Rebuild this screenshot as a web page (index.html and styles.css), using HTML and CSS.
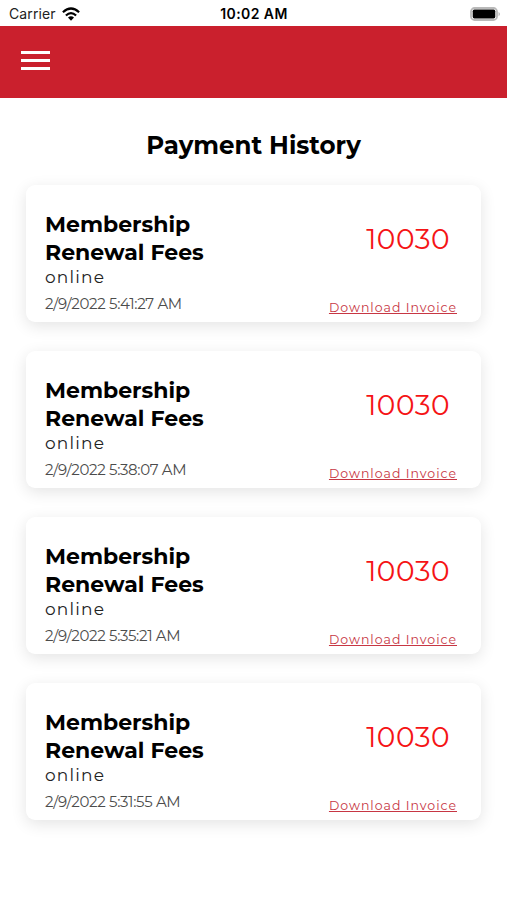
FILE: index.html
```html
<!DOCTYPE html>
<html lang="en">
<head>
<meta charset="utf-8">
<meta name="viewport" content="width=device-width, initial-scale=1">
<title>Payment History</title>
<link rel="stylesheet" href="styles.css">
</head>
<body>
<div class="status">
  <div class="carrier"><span>Carrier</span>
    <svg class="wifi" width="18" height="14" viewBox="0 0 18 14"><g fill="none" stroke="#000" stroke-width="2.2"><path d="M.9 5.2Q9-2.2 17.1 5.2"/><path d="M3.9 8.5Q9 3.8 14.1 8.5"/></g><path d="M6 10.6Q9 8 12 10.6L9 13.7Z"/></svg>
  </div>
  <div class="time">10:02 AM</div>
  <svg class="battery" width="31" height="14" viewBox="0 0 31 14"><rect x="1" y="1" width="26" height="12" rx="3.6" fill="#fff" stroke="#b9b9b9" stroke-width="1.8"/><rect x="2.7" y="2.6" width="22.6" height="8.8" rx="1.7"/><path d="M28.6 4.7Q31 7 28.6 9.3Z" fill="#aaa"/></svg>
</div>
<header class="bar"><button class="menu" aria-label="Menu"><i></i><i></i><i></i></button></header>
<main>
  <h1>Payment History</h1>
  <section class="card">
    <div class="info"><h2>Membership<br>Renewal Fees</h2><p class="mode">online</p><p class="date">2/9/2022 5:41:27 AM</p></div>
    <div class="side"><span class="amount">10030</span><a class="invoice">Download Invoice</a></div>
  </section>
  <section class="card">
    <div class="info"><h2>Membership<br>Renewal Fees</h2><p class="mode">online</p><p class="date">2/9/2022 5:38:07 AM</p></div>
    <div class="side"><span class="amount">10030</span><a class="invoice">Download Invoice</a></div>
  </section>
  <section class="card">
    <div class="info"><h2>Membership<br>Renewal Fees</h2><p class="mode">online</p><p class="date">2/9/2022 5:35:21 AM</p></div>
    <div class="side"><span class="amount">10030</span><a class="invoice">Download Invoice</a></div>
  </section>
  <section class="card">
    <div class="info"><h2>Membership<br>Renewal Fees</h2><p class="mode">online</p><p class="date">2/9/2022 5:31:55 AM</p></div>
    <div class="side"><span class="amount">10030</span><a class="invoice">Download Invoice</a></div>
  </section>
</main>
</body>
</html>
```
FILE: styles.css
```css
* { box-sizing: border-box; margin: 0; padding: 0; }
body { width: 507px; height: 900px; overflow: hidden; background: #fff; color: #000; font-family: Montserrat, Inter, sans-serif; }
.status { height: 26px; display: grid; grid-template-columns: 1fr auto 1fr; align-items: center; padding: 1px 7px 0 8px; font: 14px/24px Inter, sans-serif; }
.carrier { display: flex; align-items: center; gap: 6px; margin-left: 1px; color: #222; letter-spacing: .1px; }
.time { font-weight: 600; letter-spacing: .4px; }
.battery { justify-self: end; margin-right: -1px; }
.bar { height: 72px; background: #ca202d; padding: 25px 21px; }
.menu { display: flex; flex-direction: column; gap: 5px; width: 29px; border: 0; background: none; }
.menu i { height: 3px; background: #fff; }
h1 { margin-top: 32px; height: 30px; font-size: 24.5px; line-height: 30px; font-weight: 700; text-align: center; }
main { display: flex; flex-direction: column; }
.card { width: 455px; height: 137px; margin: 0 0 29px 26px; border-radius: 9px; background: #fff; box-shadow: 0 4px 16px rgba(0, 0, 0, .11); display: flex; justify-content: space-between; padding: 26px 24px 0 19px; }
h1 + .card { margin-top: 25px; }
h2 { font-size: 22px; line-height: 28px; font-weight: 700; }
.mode { margin-top: -1px; font-size: 17px; line-height: 22px; letter-spacing: 1.2px; color: #222; }
.date { margin-top: 6px; font-size: 15px; line-height: 20px; font-weight: 400; letter-spacing: -.33px; color: #4c4c4c; }
.side { display: flex; flex-direction: column; align-items: flex-end; }
.amount { margin: 11px 7px 0 0; font-size: 28px; line-height: 34px; font-weight: 400; letter-spacing: .5px; color: #f51416; }
.invoice { margin-top: 44px; font-size: 12.5px; line-height: 16px; letter-spacing: 1px; color: #c73643; text-decoration: underline; text-decoration-thickness: 1px; text-underline-offset: 1px; }
```
